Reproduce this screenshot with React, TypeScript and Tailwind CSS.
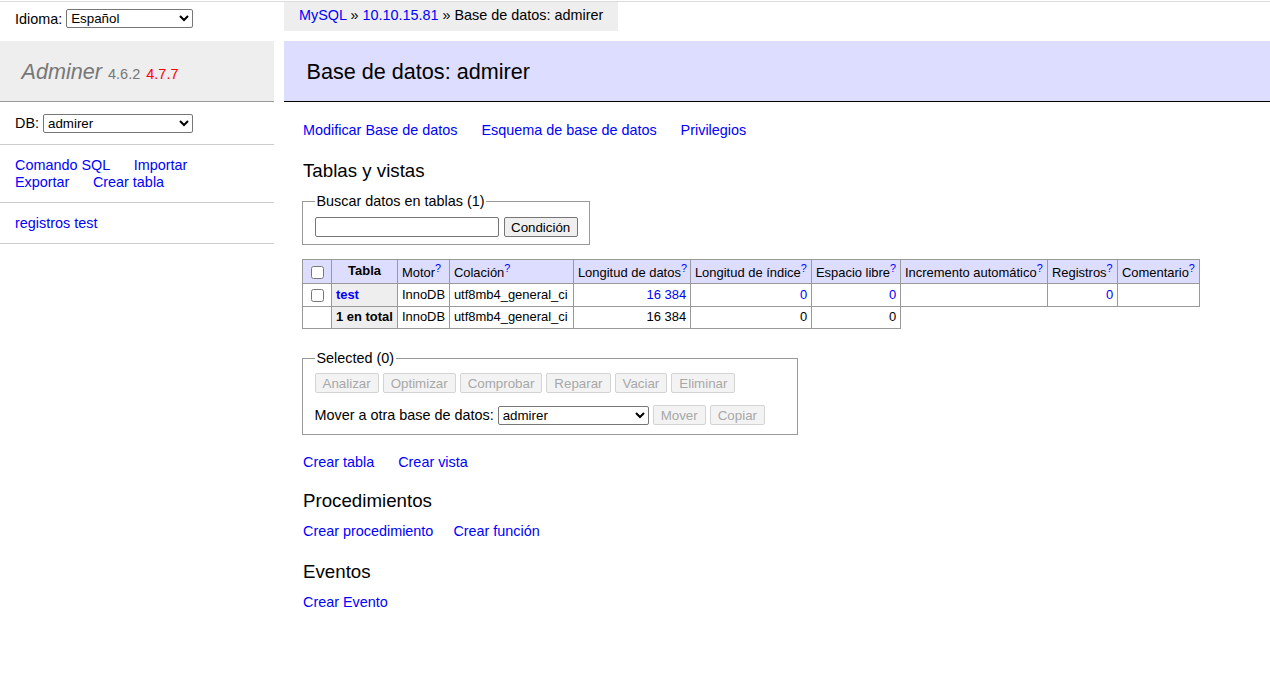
import React from "react";

const A = ({ children, className = "" }: { children: React.ReactNode; className?: string }) => (
  <a href="#" className={"text-[#0000ff] " + className}>
    {children}
  </a>
);

const Sel = ({ value, className = "" }: { value: string; className?: string }) => (
  <select
    defaultValue={value}
    className={
      "h-[19px] border border-[#767676] rounded-[2px] bg-white text-[13.33px] leading-[15px] text-black " +
      className
    }
  >
    <option>{value}</option>
  </select>
);

const Btn = ({ children, disabled = false }: { children: React.ReactNode; disabled?: boolean }) => (
  <button
    disabled={disabled}
    className={
      "h-[20px] rounded-[2px] border text-[13.33px] leading-[15px] " +
      (disabled
        ? "px-[7px] bg-[#f3f3f3] border-[#d4d4d4] text-[#a8a8a8]"
        : "px-[6.5px] bg-[#efefef] border-[#767676] text-black")
    }
  >
    {children}
  </button>
);

const Cb = () => <input type="checkbox" className="m-0 align-middle w-[13px] h-[13px]" />;

const Q = () => (
  <sup className="static align-super text-[10.8px] leading-[normal]">
    <a href="#" className="text-[#0000ff]">?</a>
  </sup>
);

export default function App() {
  const td = "border border-[#999] px-[3.9px] py-0 align-middle";
  const num = td + " text-right";
  return (
    <div className="font-['Liberation_Sans',Arial,sans-serif] text-[14.4px] leading-[18px] text-black bg-white w-full min-h-[678px]">
      <div className="h-[2px] border-b border-[#dcdcdc]" />
      <div className="flex">
        {/* Sidebar */}
        <aside className="w-[274px] shrink-0">
          <div className="h-[39px] pt-[7px] px-[15px]">
            <div className="flex items-center h-[19px] gap-[4px]">
              <span>Idioma:</span>
              <Sel value="Español" className="w-[127px]" />
            </div>
          </div>
          <h1 className="box-border h-[61px] bg-[#eee] border-b border-[#999] px-[21.6px] pt-[17px] pb-[16px] leading-[27px] text-[21.6px] font-normal text-[#777] whitespace-nowrap">
            <a href="#" className="italic text-[#777]">Adminer</a>{" "}
            <span className="text-[14.5px] text-[#777]">4.6.2</span>{" "}
            <a href="#" className="text-[14.5px] text-[#ff0000]">4.7.7</a>
          </h1>
          <div className="box-border h-[43px] border-b border-[#ccc] px-[15px] flex items-center gap-[4px]">
            <span>DB:</span>
            <Sel value="admirer" className="w-[150px]" />
          </div>
          <div className="border-b border-[#ccc] px-[15px] py-[11.5px] leading-[17px]">
            <div>
              <A className="mr-[19.5px]">Comando SQL</A> <A>Importar</A>
            </div>
            <div>
              <A className="mr-[19.5px]">Exportar</A> <A>Crear tabla</A>
            </div>
          </div>
          <div className="box-border h-[41px] border-b border-[#ccc] px-[15px] flex items-center">
            <A>registros test</A>
          </div>
        </aside>

        {/* Main */}
        <main className="flex-1 ml-[10px] min-w-0">
          <div className="h-[39px]">
            <div className="inline-block h-[29px] leading-[26px] px-[15px] bg-[#eee] whitespace-nowrap">
              <A>MySQL</A> » <A>10.10.15.81</A> » Base de datos: admirer
            </div>
          </div>
          <h2 className="box-border h-[61px] bg-[#ddf] border-b border-black pl-[22.6px] pr-[21.6px] pt-[17px] pb-[16px] leading-[27px] text-[21.6px] font-normal text-black">
            Base de datos: admirer
          </h2>
          <div className="pl-[18px]">
            <p className="mt-[19px] pl-px">
              <A className="mr-[20px]">Modificar Base de datos</A> <A className="mr-[20px]">Esquema de base de datos</A>{" "}
              <A>Privilegios</A>
            </p>
            <h3 className="mt-[19.7px] pl-px text-[18.72px] leading-[23.4px] font-normal">Tablas y vistas</h3>

            <div className="flex mt-[10px]">
              <fieldset className="border border-[#999] px-[11.5px] pb-[7px] pt-[7px]">
                <legend className="px-[2px] leading-[18px]">Buscar datos en tablas (1)</legend>
                <div className="flex items-center gap-[5px]">
                  <input type="text" className="w-[184px] h-[20px] border border-[#767676] rounded-[2px] bg-white" />
                  <Btn>Condición</Btn>
                </div>
              </fieldset>
            </div>

            <table className="mt-[14px] border-collapse table-fixed w-[898px] text-[12.96px] leading-[16.2px]">
              <colgroup>
                <col className="w-[29px]" />
                <col className="w-[66px]" />
                <col className="w-[52px]" />
                <col className="w-[124px]" />
                <col className="w-[117px]" />
                <col className="w-[121px]" />
                <col className="w-[89px]" />
                <col className="w-[147px]" />
                <col className="w-[70px]" />
                <col className="w-[82px]" />
              </colgroup>
              <thead>
                <tr className="h-[24px] bg-[#ddf]">
                  <td className={td + " text-center"}><Cb /></td>
                  <th className={td + " text-center font-bold"}>Tabla</th>
                  <td className={td + " whitespace-nowrap"}>Motor<Q /></td>
                  <td className={td + " whitespace-nowrap"}>Colación<Q /></td>
                  <td className={td + " whitespace-nowrap"}>Longitud de datos<Q /></td>
                  <td className={td + " whitespace-nowrap"}>Longitud de índice<Q /></td>
                  <td className={td + " whitespace-nowrap"}>Espacio libre<Q /></td>
                  <td className={td + " whitespace-nowrap"}>Incremento automático<Q /></td>
                  <td className={td + " whitespace-nowrap"}>Registros<Q /></td>
                  <td className={td + " whitespace-nowrap"}>Comentario<Q /></td>
                </tr>
              </thead>
              <tbody>
                <tr className="h-[23px]">
                  <td className={td + " text-center"}><Cb /></td>
                  <th className={td + " text-left bg-[#eee] font-bold"}><A>test</A></th>
                  <td className={td}>InnoDB</td>
                  <td className={td + " whitespace-nowrap"}>utf8mb4_general_ci</td>
                  <td className={num}><A>16 384</A></td>
                  <td className={num}><A>0</A></td>
                  <td className={num}><A>0</A></td>
                  <td className={td}></td>
                  <td className={num}><A>0</A></td>
                  <td className={td}></td>
                </tr>
                <tr className="h-[22px]">
                  <td className={td}></td>
                  <th className={td + " text-left bg-[#eee] font-bold whitespace-nowrap"}>1 en total</th>
                  <td className={td}>InnoDB</td>
                  <td className={td + " whitespace-nowrap"}>utf8mb4_general_ci</td>
                  <td className={num}>16 384</td>
                  <td className={num}>0</td>
                  <td className={num}>0</td>
                </tr>
              </tbody>
            </table>

            <div className="flex mt-[20px]">
              <fieldset className="w-[496px] border border-[#999] px-[11.5px] pb-[8px] pt-[6px]">
                <legend className="px-[2px] leading-[18px]">Selected (0)</legend>
                <div className="flex items-center gap-[4px]">
                  <Btn disabled>Analizar</Btn>
                  <Btn disabled>Optimizar</Btn>
                  <Btn disabled>Comprobar</Btn>
                  <Btn disabled>Reparar</Btn>
                  <Btn disabled>Vaciar</Btn>
                  <Btn disabled>Eliminar</Btn>
                </div>
                <div className="flex items-center gap-[4px] mt-[11px] h-[22px]">
                  <span>Mover a otra base de datos:</span>
                  <Sel value="admirer" className="w-[151px]" />
                  <Btn disabled>Mover</Btn>
                  <Btn disabled>Copiar</Btn>
                </div>
              </fieldset>
            </div>

            <p className="mt-[18px] pl-px">
              <A className="mr-[20px]">Crear tabla</A> <A>Crear vista</A>
            </p>
            <h3 className="mt-[17.7px] pl-px text-[18.72px] leading-[23.4px] font-normal">Procedimientos</h3>
            <p className="mt-[10px] pl-px">
              <A className="mr-[20px]">Crear procedimiento</A>
              <A>Crear función</A>
            </p>
            <h3 className="mt-[19.7px] pl-px text-[18.72px] leading-[23.4px] font-normal">Eventos</h3>
            <p className="mt-[10px] pl-px">
              <A>Crear Evento</A>
            </p>
          </div>
        </main>
      </div>
    </div>
  );
}
